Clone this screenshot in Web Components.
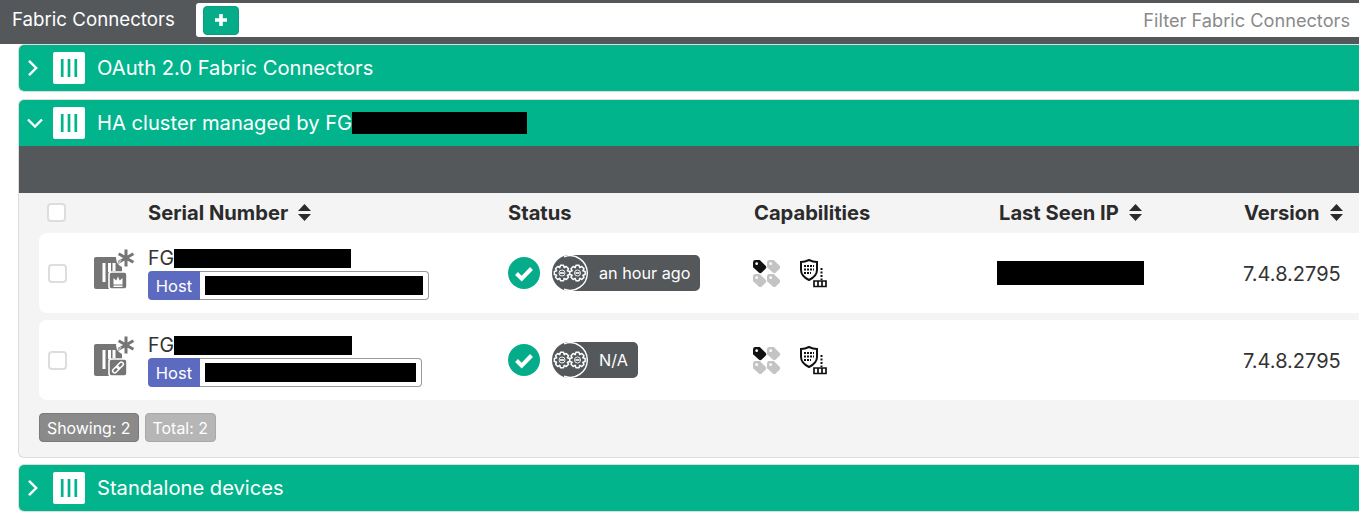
<!DOCTYPE html>
<html><head><meta charset="utf-8">
<style>
html,body{margin:0;padding:0;background:#fff;font-family:Inter,"Liberation Sans",sans-serif;color:#2b2b2b;height:512px;overflow:hidden}
fc-page{display:block}
</style></head><body>
<fc-page>
  <fc-toolbar title-text="Fabric Connectors" placeholder="Filter Fabric Connectors"></fc-toolbar>
  <fc-panel heading="OAuth 2.0 Fabric Connectors" style="--gap:7px"></fc-panel>
  <fc-panel heading="HA cluster managed by FG" redact="175" open style="--gap:6px">
    <fc-table>
      <fc-row serial="177" hostw="229" hostblack="218" kind="crown" ago="an hour ago" ip="147"></fc-row>
      <fc-row serial="178" hostw="222" hostblack="211" kind="link" ago="N/A"></fc-row>
    </fc-table>
  </fc-panel>
  <fc-panel heading="Standalone devices"></fc-panel>
</fc-page>
<script>
const mk=(name,html)=>customElements.define(name,class extends HTMLElement{
  connectedCallback(){ if(this.shadowRoot)return; const s=this.attachShadow({mode:'open'}); s.innerHTML=html(this);}
});
const a=(e,n,d='')=>e.getAttribute(n)??d;

mk('fc-toolbar',e=>`<style>
:host{display:flex;height:44px;background:#54585b;box-sizing:border-box;padding-top:3px;align-items:flex-start}
.t{width:196px;height:34px;box-sizing:border-box;padding-left:12px;color:#fff;font-size:18.7px;line-height:34px;white-space:nowrap}
.f{flex:1;height:34px;background:#fff;border-radius:3px 0 0 3px;display:flex;align-items:center;padding:0 9px 0 7px}
.b{width:36px;height:29px;background:#05ac8a;border:1px solid #0a9c7e;box-sizing:border-box;border-radius:4px;display:flex;align-items:center;justify-content:center}
.p{flex:1;text-align:right;color:#8a8a8a;font-size:18.2px}
</style><div class="t">${a(e,'title-text')}</div><div class="f"><div class="b"><svg width="14" height="14" viewBox="0 0 14 14"><path d="M7 1v12M1 7h12" stroke="#fff" stroke-width="3.6"/></svg></div><div class="p">${a(e,'placeholder')}</div></div>`);

mk('fc-panel',e=>{const open=e.hasAttribute('open');const r=a(e,'redact');return `<style>
:host{display:block;margin:0 0 var(--gap,0) 18px;background:#f4f4f4;border:1px solid #ddd;border-right:0;border-radius:6px 0 0 6px;overflow:hidden}
.h{height:46px;background:#02b48c;display:flex;align-items:center;color:#fff;font-size:20.16px;white-space:nowrap}
.c{width:34px;height:16px;flex:none;display:flex}
.c svg{margin-left:${open?8:7}px}
.i{width:32px;height:32px;flex:none;background:#fff;border-radius:2px;display:flex;align-items:center;justify-content:center;margin-right:12px}
.red{display:inline-block;background:#000;width:${r}px;height:22px}
.ttl{display:flex;align-items:center;margin-top:-1px}
.band{height:47px;background:#54585b}
</style><div class="h"><div class="c"><svg width="16" height="16" viewBox="0 0 16 16"><path d="${open?'M1 4.500l7 7 7-7':'M3 .8l7.200 7.200-7.200 7.200'}" fill="none" stroke="#fff" stroke-width="2.400"/></svg></div>
<div class="i"><svg width="18" height="18" viewBox="0 0 18 18"><path d="M2.200 0v18M9 0v18M15.800 0v18" stroke="#02b48c" stroke-width="2.700"/></svg></div>
<div class="ttl">${a(e,'heading')}${r?`<span class="red"></span>`:''}</div></div>
${open?`<div class="band"></div><slot></slot>`:''}`});

const sortI=`<svg width="13" height="17" viewBox="0 0 13 17" style="margin-left:10px"><path d="M6.500 0L13 7H0zM6.500 17L0 10h13z" fill="#2b2b2b"/></svg>`;
mk('fc-table',e=>`<style>
:host{display:block;padding:0 0 15px 20px}
.g{display:grid;grid-template-columns:109px 360px 246px 244px 246px 1fr;height:38px;padding-bottom:2px;align-items:center;font-weight:700;font-size:20.15px;color:#2b2b2b;white-space:nowrap}
.g>div{display:flex;align-items:center}
.cb{width:15px;height:15px;border:2px solid #ddd;border-radius:4px;background:#fff;margin-left:8px}
.rows{display:flex;flex-direction:column;gap:7px}
.ft{display:flex;gap:6px;margin-top:13px;font-size:15.9px;color:#fff}
.s{height:29px;box-sizing:border-box;padding:1px 7px 0;display:flex;align-items:center;border-radius:4px;border:1px solid #7a7a7a;background:#8a8a8a}
.t{border-color:#a8a8a8;background:#b6b6b6}
</style><div class="g"><div><span class="cb"></span></div><div>Serial Number${sortI}</div><div>Status</div><div>Capabilities</div><div style="margin-left:1px">Last Seen IP${sortI}</div><div>Version${sortI}</div></div>
<div class="rows"><slot></slot></div>
<div class="ft"><div class="s">Showing: 2</div><div class="s t">Total: 2</div></div>`);

const gear=(x,y)=>{let p='';const n=8;for(let i=0;i<n;i++){const s=i*2*Math.PI/n,w=.2;
 const pt=(r,t)=>`${(x+r*Math.cos(t)).toFixed(2)} ${(y+r*Math.sin(t)).toFixed(2)}`;
 p+=(i?'L':'M')+pt(5.8,s-.4)+'L'+pt(7.8,s-w)+'L'+pt(7.8,s+w)+'L'+pt(5.8,s+.4);}
 return `<path d="${p}Z" fill="#54585b" stroke="#fff" stroke-width="1.500" stroke-linejoin="round"/><circle cx="${x}" cy="${y}" r="3" fill="none" stroke="#fff" stroke-width=".9"/><rect x="${x-2}" y="${y-.8}" width="4" height="1.600" fill="#fff"/>`};
const fabric=k=>`<svg width="42" height="44" viewBox="0 0 42 44">
<rect x="0" y="9" width="28" height="32" rx="2" fill="#757575"/>
<path d="M10 15v19M15.500 15v9M20 15v8" stroke="#fff" stroke-width="3"/>
<circle cx="32" cy="10" r="10" fill="#fff"/>
<path d="M32 1.500v17M24.600 5.700l14.800 8.500M24.600 14.300l14.800-8.500" stroke="#757575" stroke-width="3"/>
<path d="M27 12l-3 4" stroke="#bdbdbd" stroke-width="1.500"/>
<rect x="15" y="24" width="18" height="17" rx="2.500" fill="#757575" stroke="#fff" stroke-width="1.600"/>
${k==='crown'?`<path d="M19.500 30l2.800 2.500 1.700-4 1.700 4 2.800-2.500v6.500h-9zM19.500 37.500h9v1.500h-9z" fill="#fff"/>`
:`<g fill="none" stroke="#fff" stroke-width="1.500" transform="rotate(-45 24 32.500)"><rect x="17.300" y="30.500" width="7.500" height="4" rx="2"/><rect x="23.200" y="30.500" width="7.500" height="4" rx="2"/></g>`}
</svg>`;
const tag=(x,y,c)=>`<g transform="translate(${x} ${y}) scale(.97)"><path d="M0 2.500a2.500 2.500 0 0 1 2.500-2.500h4.500l6 6a2.200 2.200 0 0 1 0 3l-4 4a2.200 2.200 0 0 1-3 0L0 7.500z" fill="${c}"/><circle cx="3.800" cy="3.800" r="1.400" fill="#fff"/></g>`;
mk('fc-row',e=>{const ip=a(e,'ip');return `<style>
:host{display:grid;grid-template-columns:55px 54px 360px 246px 244px 246px 1fr;height:80px;background:#fff;border-radius:8px 0 0 8px;align-items:center;white-space:nowrap}
.cb{width:15px;height:15px;border:2px solid #ddd;border-radius:4px;background:#fff;margin-left:9px;display:block;margin-top:1px}
.ic{display:flex;height:44px;align-self:start;margin-top:15px}
.sn{font-size:19.500px;line-height:20px;color:#333;display:flex;flex-direction:column;padding-top:2px}
.fg{display:flex;align-items:center;height:20px}
.r{background:#000;height:19px;display:block;flex:none}
.hb{display:flex;height:29px;margin-top:3px;width:${+a(e,'hostw')+52}px}
.ht{width:52px;flex:none;background:#5c6bc0;color:#fff;font-size:16.500px;border-radius:4px 0 0 4px;display:flex;align-items:center;justify-content:center}
.hv{flex:1;border:1px solid #999;border-left:0;border-radius:0 4px 4px 0;display:flex;align-items:center;padding-left:5px;box-sizing:border-box}
.st{display:flex;align-items:center;gap:12px}
.pill{display:flex;align-items:center;height:36px;background:#54585b;border-radius:18px 5px 5px 18px;color:#fff;font-size:16.200px;padding-right:10px}
.disc{width:36px;height:36px;display:block;margin-right:11px}
.cap{display:flex;align-items:center;gap:20px;margin-left:-1px}
.ipb{background:#000;width:${ip||0}px;height:24px;margin-left:-1px}
.v{font-size:20px;color:#333;margin-left:-1px;margin-top:1px}
</style>
<div><span class="cb"></span></div>
<div class="ic">${fabric(a(e,'kind'))}</div>
<div class="sn"><div class="fg">FG<span class="r" style="width:${a(e,'serial')}px"></span></div>
<div class="hb"><div class="ht">Host</div><div class="hv"><span class="r" style="width:${a(e,'hostblack')}px"></span></div></div></div>
<div class="st"><svg width="32" height="32" viewBox="0 0 32 32"><circle cx="16" cy="16" r="16" fill="#05ac8a"/><path d="M8.500 16.500l5.200 5.200L23.500 11.500" fill="none" stroke="#fff" stroke-width="4"/></svg>
<div class="pill"><svg class="disc" viewBox="0 0 36 36"><circle cx="18" cy="18" r="17.300" fill="#54585b"/><path d="M12.100 1.740A17.300 17.300 0 1 1 12.100 34.260" fill="none" stroke="#fff" stroke-width="1.400"/>${gear(10,18)}${gear(25.500,18)}</svg><span>${a(e,'ago')}</span></div></div>
<div class="cap"><svg width="27" height="27" viewBox="0 0 27 27">${tag(0,0,'#111')}${tag(14,0,'#c4c4c4')}${tag(0,14,'#c4c4c4')}${tag(14,14,'#c4c4c4')}</svg>
<svg width="27" height="29" viewBox="0 0 27 29"><path d="M1 3c4 0 6-1 8-2 2 1 4 2 8 2v8c0 5-4 8-8 10C5 19 1 16 1 11z" fill="#fff" stroke="#111" stroke-width="2"/><path d="M4 7h10M4 10.500h10M4 14h7" stroke="#111" stroke-width="2.200" stroke-dasharray="2 1" fill="none"/><path d="M21.500 9v12" stroke="#111" stroke-width="2" stroke-dasharray="2 1.500"/><path d="M14 27.500v-5.500h12v5.500zM18 22v5.500M22 22v5.500" fill="none" stroke="#111" stroke-width="1.700"/></svg></div>
<div>${ip?'<div class="ipb"></div>':''}</div>
<div class="v">7.4.8.2795</div>`});
</script>
</body></html>
